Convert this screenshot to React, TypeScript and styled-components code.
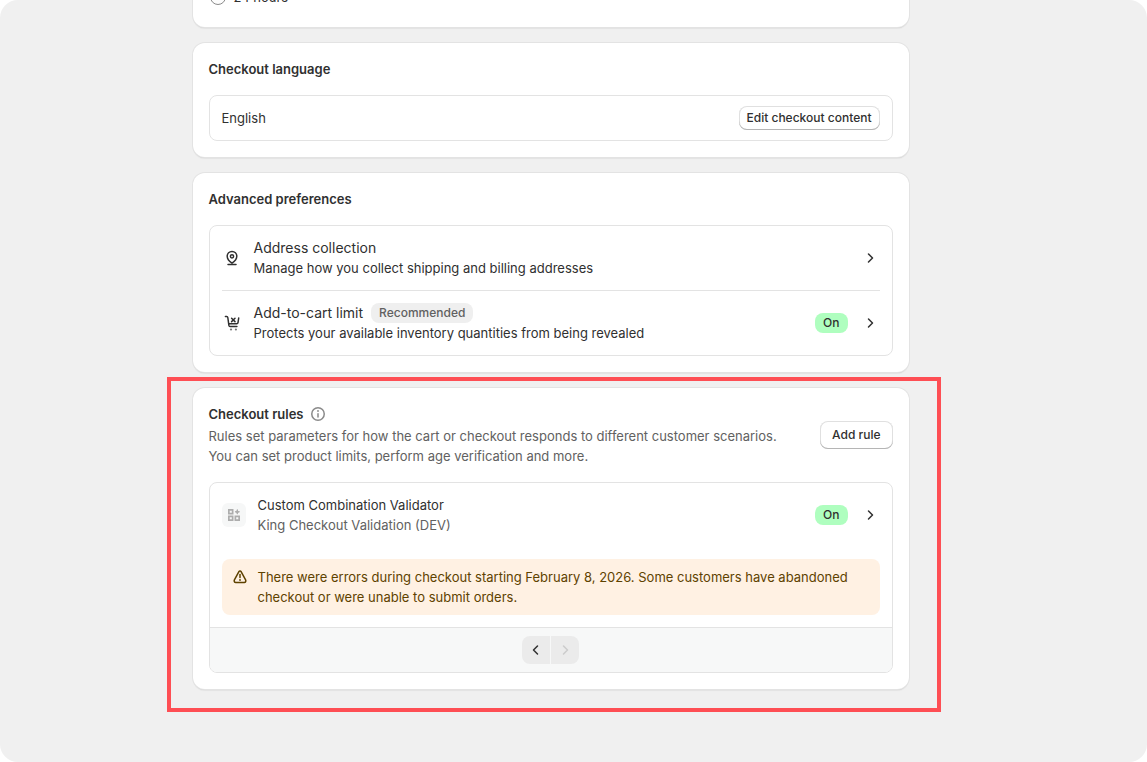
import React from "react";
import styled, { createGlobalStyle } from "styled-components";

const GlobalStyle = createGlobalStyle`
  *, *::before, *::after { box-sizing: border-box; }
  body {
    margin: 0;
    background: #fff;
    color: #303030;
    font-family: Inter, "Liberation Sans", sans-serif;
    font-size: 13px;
    line-height: 20px;
  }
  h2, p { margin: 0; }
  ul { margin: 0; padding: 0; list-style: none; }
`;

const Page = styled.main`
  min-height: 100vh;
  overflow: hidden;
  padding-right: 46px;
  border-radius: 18px;
  background: #f0f0f0;
`;

const Column = styled.div`
  display: flex;
  flex-direction: column;
  gap: 16px;
  max-width: 716px;
  margin: -33px auto 0;
  padding-bottom: 64px;
`;

const Card = styled.section`
  position: relative;
  padding: 16px;
  border-radius: 12px;
  background: #fff;
  box-shadow: 0 0 0 1px #e3e3e3, 0 1px 0 #cccccc, 0 2px 1px rgba(26, 26, 26, 0.06);
`;

const Highlight = styled.div`
  position: absolute;
  inset: -11px -32px -23px -26px;
  border: 4px solid #fe4e54;
  pointer-events: none;
`;

const RadioLabel = styled.label`
  display: flex;
  align-items: center;
  gap: 8px;
  padding: 4px 1px;
`;

const Radio = styled.input`
  appearance: none;
  width: 16px;
  height: 16px;
  margin: 0;
  border: 1px solid #8a8a8a;
  border-radius: 50%;
  background: #fdfdfd;
`;

const Title = styled.h2`
  font-size: 13px;
  line-height: 20px;
  font-weight: 600;
`;

const Panel = styled.div`
  overflow: hidden;
  margin-top: 16px;
  border: 1px solid #e3e3e3;
  border-radius: 8px;
`;

const LanguageRow = styled.div`
  display: flex;
  align-items: center;
  justify-content: space-between;
  padding: 10px 12px;
`;

const Button = styled.button<{ $large?: boolean }>`
  flex: none;
  height: ${(p) => (p.$large ? 28 : 24)}px;
  padding: 0 ${(p) => (p.$large ? 12 : 8)}px;
  border: 0;
  border-radius: 8px;
  background: #fff;
  color: #303030;
  font: 500 12px/16px Inter, "Liberation Sans", sans-serif;
  box-shadow: inset 0 -1px 0 #b5b5b5, inset 0 0 0 1px #e0e0e0;
`;

const List = styled.ul`
  padding: 0 12px;
`;

const ListItem = styled.li`
  & + & { border-top: 1px solid #e3e3e3; }
`;

const RowLink = styled.a`
  display: flex;
  align-items: center;
  gap: 12px;
  padding: 12px 0;
  color: inherit;
  text-decoration: none;
`;

const RowText = styled.div`
  flex: 1;
  min-width: 0;
`;

const RowTitle = styled.div`
  display: flex;
  align-items: center;
  gap: 8px;
  font-size: 14px;
`;

const Muted = styled.p`
  color: #616161;
`;

const Badge = styled.span<{ $success?: boolean }>`
  padding: 2px 8px;
  border-radius: 8px;
  background: ${(p) => (p.$success ? "#affebf" : "#efefef")};
  color: ${(p) => (p.$success ? "#303030" : "#616161")};
  font-size: 12px;
  line-height: 16px;
  font-weight: 500;
`;

const RulesHeader = styled.div`
  display: flex;
  align-items: center;
  justify-content: space-between;
  gap: 24px;
`;

const RulesIntro = styled.div`
  display: flex;
  flex-direction: column;
  gap: 2px;
  max-width: 590px;
`;

const TitleLine = styled.div`
  display: flex;
  align-items: center;
  gap: 4px;
`;

const Icon = styled.svg`
  display: block;
  flex: none;
  width: 20px;
  height: 20px;
  fill: none;
  stroke: currentColor;
  stroke-width: 1.5;
  stroke-linecap: round;
  stroke-linejoin: round;
`;

const AppTile = styled.span`
  display: grid;
  place-items: center;
  width: 24px;
  height: 24px;
  border-radius: 6px;
  background: #f6f7f7;
  color: #adadad;
`;

const RuleBody = styled.div`
  padding: 0 12px 12px;
`;

const Banner = styled.div`
  display: flex;
  gap: 8px;
  margin-top: 12px;
  padding: 8px;
  border-radius: 8px;
  background: #fff1e3;
  color: #5e4200;
`;

const Footer = styled.nav`
  display: flex;
  justify-content: center;
  gap: 1px;
  padding: 8px;
  border-top: 1px solid #e3e3e3;
  background: #f7f8f8;
`;

const PageButton = styled.button`
  display: grid;
  place-items: center;
  width: 28px;
  height: 28px;
  padding: 0;
  border: 0;
  background: #ebebeb;
  color: #303030;
  &:first-child { border-radius: 8px 0 0 8px; }
  &:last-child { border-radius: 0 8px 8px 0; }
  &:disabled { color: #cccccc; }
`;

const ChevronRight = () => (
  <Icon viewBox="0 0 20 20" aria-hidden="true"><path d="M8.5 6l4 4-4 4" /></Icon>
);

const ChevronLeft = () => (
  <Icon viewBox="0 0 20 20" aria-hidden="true"><path d="M11.5 6l-4 4 4 4" /></Icon>
);

const LocationIcon = () => (
  <Icon viewBox="0 0 20 20" aria-hidden="true">
    <path d="M10 15.2C8 13.8 5.2 11.3 5.2 8.2a4.8 4.8 0 0 1 9.6 0c0 3.1-2.8 5.6-4.8 7Z" />
    <circle cx="10" cy="8.3" r="1.6" />
    <path d="M6 16.5h8" />
  </Icon>
);

const CartIcon = () => (
  <Icon viewBox="0 0 20 20" aria-hidden="true">
    <path d="M3.4 3.5h1.3c.6 0 1 .4 1.1 1l.9 6.3M16.7 5l-.7 4.7c-.1.7-.6 1.1-1.3 1.1h-8l.2 1.6c.1.6.5 1 1.1 1h6.9" />
    <path d="M9.6 5.2l3.4 3.4M13 5.2L9.6 8.6" />
    <g fill="currentColor" stroke="none" opacity="0.65">
      <circle cx="9" cy="16.5" r="1.1" />
      <circle cx="13.9" cy="16.5" r="1.1" />
    </g>
  </Icon>
);

const InfoIcon = () => (
  <Icon viewBox="0 0 20 20" color="#8a8a8a" role="img" aria-label="About checkout rules">
    <circle cx="10" cy="10" r="6.25" />
    <path d="M10 9.7v3.2" />
    <circle cx="10" cy="7" r="0.9" fill="currentColor" stroke="none" />
  </Icon>
);

const AppsIcon = () => (
  <Icon viewBox="0 0 20 20" aria-hidden="true">
    <path
      fill="currentColor"
      fillRule="evenodd"
      stroke="none"
      d="M4 4h5.5v5.5H4ZM5.7 5.7v2.1h2.1V5.7ZM4 10.5h5.5V16H4ZM5.7 12.2v2.1h2.1v-2.1ZM10.5 10.5H16V16h-5.5ZM12.2 12.2v2.1h2.1v-2.1Z"
    />
    <path
      fill="currentColor"
      stroke="none"
      d="M13.3 4.2l.9 1.7 1.7.9-1.7.9-.9 1.7-.9-1.7-1.7-.9 1.7-.9Z"
    />
    <path strokeWidth="1" d="M13.3 4.9v3.8M11.4 6.8h3.8" />
  </Icon>
);

const AlertIcon = () => (
  <Icon viewBox="0 0 20 20" aria-hidden="true">
    <path d="M8.9 4.6c.5-.9 1.7-.9 2.2 0l4.5 8.3c.6 1.3 0 2.6-1.3 2.6H5.7c-1.3 0-1.9-1.3-1.3-2.6Z" />
    <path d="M10 7.5v3" />
    <circle cx="10" cy="13" r="0.9" fill="currentColor" stroke="none" />
  </Icon>
);

export default function App() {
  return (
    <>
      <GlobalStyle />
      <Page>
        <Column>
          <Card>
            <RadioLabel>
              <Radio type="radio" name="delay" />
              24 hours
            </RadioLabel>
          </Card>

          <Card>
            <Title>Checkout language</Title>
            <Panel>
              <LanguageRow>
                <span>English</span>
                <Button type="button">Edit checkout content</Button>
              </LanguageRow>
            </Panel>
          </Card>

          <Card>
            <Title>Advanced preferences</Title>
            <Panel>
              <List>
                <ListItem>
                  <RowLink href="#address-collection">
                    <LocationIcon />
                    <RowText>
                      <RowTitle>Address collection</RowTitle>
                      <p>Manage how you collect shipping and billing addresses</p>
                    </RowText>
                    <ChevronRight />
                  </RowLink>
                </ListItem>
                <ListItem>
                  <RowLink href="#add-to-cart-limit">
                    <CartIcon />
                    <RowText>
                      <RowTitle>
                        Add-to-cart limit
                        <Badge>Recommended</Badge>
                      </RowTitle>
                      <p>Protects your available inventory quantities from being revealed</p>
                    </RowText>
                    <Badge $success>On</Badge>
                    <ChevronRight />
                  </RowLink>
                </ListItem>
              </List>
            </Panel>
          </Card>

          <Card>
            <RulesHeader>
              <RulesIntro>
                <TitleLine>
                  <Title>Checkout rules</Title>
                  <InfoIcon />
                </TitleLine>
                <Muted>
                  Rules set parameters for how the cart or checkout responds to different customer
                  scenarios. You can set product limits, perform age verification and more.
                </Muted>
              </RulesIntro>
              <Button type="button" $large>Add rule</Button>
            </RulesHeader>
            <Panel>
              <RuleBody>
                <RowLink href="#custom-combination-validator">
                  <AppTile><AppsIcon /></AppTile>
                  <RowText>
                    <p>Custom Combination Validator</p>
                    <Muted>King Checkout Validation (DEV)</Muted>
                  </RowText>
                  <Badge $success>On</Badge>
                  <ChevronRight />
                </RowLink>
                <Banner role="status">
                  <AlertIcon />
                  <p>
                    There were errors during checkout starting February 8, 2026. Some customers have
                    abandoned checkout or were unable to submit orders.
                  </p>
                </Banner>
              </RuleBody>
              <Footer aria-label="Pagination">
                <PageButton type="button" aria-label="Previous"><ChevronLeft /></PageButton>
                <PageButton type="button" aria-label="Next" disabled><ChevronRight /></PageButton>
              </Footer>
            </Panel>
            <Highlight />
          </Card>
        </Column>
      </Page>
    </>
  );
}
